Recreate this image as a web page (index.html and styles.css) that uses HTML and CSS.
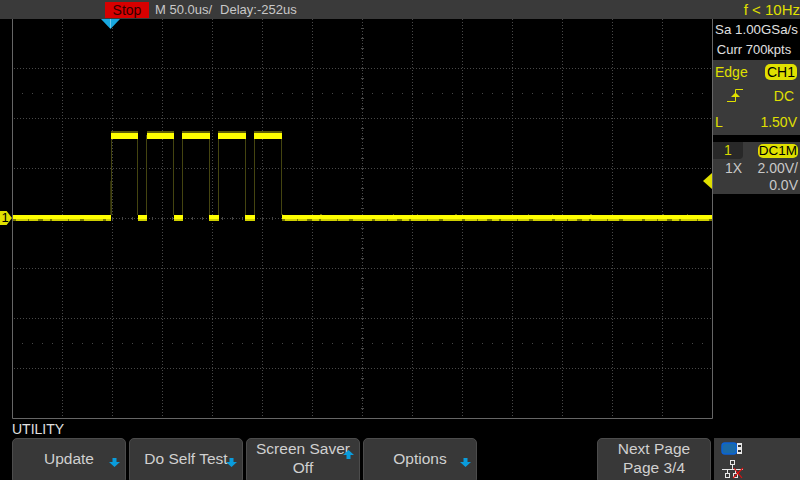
FILE: index.html
```html
<!DOCTYPE html>
<html lang="en">
<head>
  <meta charset="UTF-8">
  <title>Oscilloscope - Utility</title>
  <link rel="stylesheet" href="styles.css">
</head>
<body>
  <div class="screen">
    <!-- top status bar -->
    <div class="topbar">
      <div class="stop">Stop</div>
      <div class="timebase">M 50.0us/</div>
      <div class="delay">Delay:-252us</div>
      <div class="freq">f &lt; 10Hz</div>
    </div>

    <div class="main">
      <div class="scope">
        <svg class="plot" width="701" height="400" viewBox="12 19 701 400">
          <!-- graticule -->
          <g class="grid">
            <line x1="62.5" y1="19" x2="62.5" y2="418"/>
            <line x1="112.5" y1="19" x2="112.5" y2="418"/>
            <line x1="162.5" y1="19" x2="162.5" y2="418"/>
            <line x1="212.5" y1="19" x2="212.5" y2="418"/>
            <line x1="262.5" y1="19" x2="262.5" y2="418"/>
            <line x1="312.5" y1="19" x2="312.5" y2="418"/>
            <line x1="362.5" y1="19" x2="362.5" y2="418"/>
            <line x1="412.5" y1="19" x2="412.5" y2="418"/>
            <line x1="462.5" y1="19" x2="462.5" y2="418"/>
            <line x1="512.5" y1="19" x2="512.5" y2="418"/>
            <line x1="562.5" y1="19" x2="562.5" y2="418"/>
            <line x1="612.5" y1="19" x2="612.5" y2="418"/>
            <line x1="662.5" y1="19" x2="662.5" y2="418"/>
            <line x1="14" y1="68.5" x2="712" y2="68.5"/>
            <line x1="14" y1="118.5" x2="712" y2="118.5"/>
            <line x1="14" y1="168.5" x2="712" y2="168.5"/>
            <line x1="14" y1="218.5" x2="712" y2="218.5"/>
            <line x1="14" y1="268.5" x2="712" y2="268.5"/>
            <line x1="14" y1="318.5" x2="712" y2="318.5"/>
            <line x1="14" y1="368.5" x2="712" y2="368.5"/>
          </g>
          <g class="sparse">
            <line x1="22" y1="93.5" x2="712" y2="93.5"/>
            <line x1="22" y1="343.5" x2="712" y2="343.5"/>
          </g>
          <line x1="362.5" y1="28" x2="362.5" y2="418" class="tick"/>
          <line x1="22" y1="218.5" x2="712" y2="218.5" class="tick"/>
          <path class="frame" d="M12.5 19V418.5H712.5V19"/>

          <!-- edges of the pulses -->
          <g class="edges">
            <line class="edge-faint" x1="110.5" y1="181" x2="110.5" y2="215"/>
            <line x1="111.5" y1="135" x2="111.5" y2="215"/>
            <line x1="137.5" y1="135" x2="137.5" y2="215"/>
            <line x1="146.5" y1="135" x2="146.5" y2="215"/>
            <line x1="173.5" y1="135" x2="173.5" y2="215"/>
            <line x1="182.5" y1="135" x2="182.5" y2="215"/>
            <line x1="209.5" y1="135" x2="209.5" y2="215"/>
            <line x1="218.5" y1="135" x2="218.5" y2="215"/>
            <line x1="245.5" y1="135" x2="245.5" y2="215"/>
            <line x1="254.5" y1="135" x2="254.5" y2="215"/>
            <line x1="281.5" y1="135" x2="281.5" y2="215"/>
          </g>

          <!-- high level -->
          <g class="fuzz-top">
            <rect x="111" y="131" width="27" height="3"/>
            <rect x="147" y="131" width="27" height="3"/>
            <rect x="182" y="131" width="28" height="3"/>
            <rect x="218" y="131" width="28" height="3"/>
            <rect x="254" y="131" width="28" height="3"/>
          </g>
          <g class="trace">
            <rect x="111" y="133" width="27" height="6"/>
            <rect x="147" y="133" width="27" height="6"/>
            <rect x="182" y="133" width="28" height="6"/>
            <rect x="218" y="133" width="28" height="6"/>
            <rect x="254" y="133" width="28" height="6"/>
          </g>

          <!-- low level -->
          <g class="fuzz-low">
            <rect x="13" y="219" width="98" height="2"/>
            <rect x="138" y="219" width="9" height="2"/>
            <rect x="174" y="219" width="9" height="2"/>
            <rect x="209" y="219" width="10" height="2"/>
            <rect x="245" y="219" width="10" height="2"/>
            <rect x="282" y="219" width="430" height="2"/>
          </g>
          <line class="mottle" x1="13" y1="220" x2="111" y2="220"/>
          <line class="mottle" x1="282" y1="220" x2="712" y2="220"/>
          <line class="noise" x1="282" y1="214.5" x2="712" y2="214.5"/>
          <g class="trace">
            <rect x="13" y="215" width="98" height="4"/>
            <rect x="138" y="215" width="9" height="4"/>
            <rect x="174" y="215" width="9" height="4"/>
            <rect x="209" y="215" width="10" height="4"/>
            <rect x="245" y="215" width="10" height="4"/>
            <rect x="282" y="215" width="430" height="4"/>
          </g>
        </svg>

        <!-- markers lying on the plot -->
        <svg class="trig-marker" width="19" height="10" viewBox="0 0 19 10">
          <path fill="#18a8e0" d="M0 0H19L9.5 10Z"/>
          <rect x="9" width="1" height="9" fill="#6cc8ec"/>
        </svg>
        <div class="ch-marker">1</div>
        <div class="level-marker"></div>
      </div>

      <div class="side">
        <div class="acq">
          <div class="acq-rate">Sa 1.00GSa/s</div>
          <div class="acq-depth">Curr 700kpts</div>
        </div>

        <div class="trig">
          <div class="row">
            <span>Edge</span>
            <span class="badge">CH1</span>
          </div>
          <div class="row">
            <svg class="edge-icon" width="18" height="16" viewBox="0 0 18 16">
              <path fill="none" stroke="#e0e000" d="M0 13.5H8.5V1.5H16"/>
              <path fill="#e0e000" d="M4 9L8.5 4.500L13 9Z"/>
            </svg>
            <span class="coupling">DC</span>
          </div>
          <div class="row">
            <span>L</span>
            <span>1.50V</span>
          </div>
        </div>

        <div class="chan">
          <div class="chan-top">
            <div class="chan-tab">1</div>
            <span class="badge badge-wide">DC1M</span>
          </div>
          <div class="chan-row">
            <span class="probe">1X</span>
            <span>2.00V/</span>
          </div>
          <div class="chan-offset">0.0V</div>
        </div>
      </div>
    </div>

    <div class="menu-title">UTILITY</div>

    <div class="softkeys">
      <div class="key">Update
        <svg class="arrow" width="11" height="9" viewBox="0 0 11 9"><path d="M3.5 0H7.5V4H11L5.5 9L0 4H3.5Z"/></svg>
      </div>
      <div class="key">Do Self Test
        <svg class="arrow" width="11" height="9" viewBox="0 0 11 9"><path d="M3.5 0H7.5V4H11L5.5 9L0 4H3.5Z"/></svg>
      </div>
      <div class="key">Screen Saver<br>Off
        <svg class="arrow arrow-up" width="11" height="9" viewBox="0 0 11 9"><path d="M3.5 9H7.5V5H11L5.5 0L0 5H3.5Z"/></svg>
      </div>
      <div class="key">Options
        <svg class="arrow" width="11" height="9" viewBox="0 0 11 9"><path d="M3.5 0H7.5V4H11L5.5 9L0 4H3.5Z"/></svg>
      </div>
      <div class="key-gap"></div>
      <div class="key">Next Page<br>Page 3/4</div>
      <div class="status">
        <svg width="24" height="14" viewBox="0 0 24 14">
          <rect x="1" y="1" width="14.5" height="11" rx="3" fill="#1a6aa8" stroke="#0a62d8" stroke-width="1.5"/>
          <rect x="16" y="1" width="5" height="11" fill="#e8e8e8"/>
          <rect x="17" y="3" width="3" height="2" fill="#333"/>
          <rect x="17" y="8" width="3" height="2" fill="#333"/>
        </svg>
        <svg width="24" height="20" viewBox="0 0 24 20">
          <g fill="none" stroke="#e8e8e8">
            <rect x="9.5" y="0.5" width="4" height="4"/>
            <path d="M11.5 5V9M1 9.5H22M6.5 9.5V13M14.5 9.5V13"/>
            <rect x="4.5" y="13.5" width="4" height="4"/>
            <rect x="12.5" y="13.5" width="4" height="4"/>
          </g>
          <path fill="none" stroke="#e01010" stroke-width="1.2" d="M13 8L21 18M22 8L12 18"/>
        </svg>
      </div>
    </div>
  </div>
</body>
</html>
```

FILE: styles.css
```css
html, body {
  margin: 0;
  padding: 0;
  background: #000;
}

.screen {
  width: 800px;
  height: 480px;
  overflow: hidden;
  display: flex;
  flex-direction: column;
  font-family: "Liberation Sans", Arial, sans-serif;
  font-size: 14px;
  color: #c8c8c8;
}

/* top bar */
.topbar {
  height: 19px;
  flex: none;
  display: flex;
  align-items: center;
  padding-left: 105px;
  background: #3a3a3a;
}

.stop {
  width: 44px;
  height: 16px;
  line-height: 16px;
  text-align: center;
  background: #d80000;
  color: #300;
  font-size: 14px;
}

.timebase {
  margin-left: 6px;
  font-size: 13px;
}

.delay {
  margin-left: 8px;
  font-size: 13px;
}

.freq {
  margin-left: auto;
  color: #e0e000;
  font-size: 15px;
  white-space: nowrap;
}

/* scope + side panel */
.main {
  height: 400px;
  flex: none;
  display: flex;
}

.scope {
  position: relative;
  width: 713px;
  padding-left: 12px;
  box-sizing: border-box;
}

.plot {
  display: block;
}

.grid line {
  stroke: #484848;
  stroke-dasharray: 1 2;
}

.sparse line {
  stroke: #484848;
  stroke-dasharray: 1 9;
}

.tick {
  stroke: #484848;
  stroke-width: 3;
  stroke-dasharray: 1 9;
}

.frame {
  fill: none;
  stroke: #666;
}

.edges line {
  stroke: #444410;
}

.edges .edge-faint {
  stroke: #2c2c08;
}

.trace rect {
  fill: #ffff00;
}

.fuzz-top rect {
  fill: #5c5c08;
}

.fuzz-low rect {
  fill: #d0d000;
}

.mottle {
  stroke: #787800;
  stroke-width: 2;
  stroke-dasharray: 3 12 1 9 5 7 2 16 1 11 4 19;
}

.noise {
  stroke: #5c5c08;
  stroke-dasharray: 1 37 2 71 1 23;
}

.trig-marker {
  position: absolute;
  left: 101px;
  top: 0;
}

.ch-marker {
  position: absolute;
  left: 0;
  top: 192px;
  width: 12px;
  height: 14px;
  line-height: 14px;
  padding-right: 2px;
  box-sizing: border-box;
  text-align: center;
  font-size: 13px;
  color: #000;
  background: #e0e000;
  clip-path: polygon(0 0, 55% 0, 100% 50%, 55% 100%, 0 100%);
}

.level-marker {
  position: absolute;
  left: 703px;
  top: 154px;
  width: 0;
  height: 0;
  border-top: 8.5px solid transparent;
  border-bottom: 8.5px solid transparent;
  border-right: 9px solid #e0e000;
}

.side {
  width: 87px;
  flex: none;
}

.acq {
  height: 41px;
  padding-top: 1px;
  box-sizing: border-box;
  text-align: center;
  color: #e0e0e0;
}

.acq-rate {
  height: 20px;
  line-height: 20px;
  font-size: 13.3px;
}

.acq-depth {
  height: 20px;
  line-height: 20px;
  padding-right: 5px;
  font-size: 13px;
}

.trig {
  height: 75px;
  display: grid;
  grid-template-rows: 23px 25px 27px;
  padding: 0 3px 0 2px;
  box-sizing: border-box;
  background: #3a3a3a;
  color: #e0e000;
  font-size: 14px;
}

.row {
  display: flex;
  align-items: center;
  justify-content: space-between;
}

.edge-icon {
  margin-left: 12px;
}

.coupling {
  margin-right: 3px;
}

.badge {
  width: 32px;
  height: 16px;
  line-height: 16px;
  text-align: center;
  border-radius: 5px;
  background: #e0e000;
  color: #000;
}

.badge-wide {
  width: 40px;
  height: 14px;
  line-height: 14px;
  margin-right: 2px;
  font-size: 13.5px;
}

.chan {
  height: 52px;
  margin-top: 7px;
  background: #3a3a3a;
  font-size: 14px;
}

.chan-top {
  height: 17px;
  display: flex;
  align-items: center;
  justify-content: space-between;
}

.chan-tab {
  width: 30px;
  height: 17px;
  line-height: 17px;
  text-align: center;
  background: #282828;
  color: #d8d800;
  border-radius: 0 0 4px 0;
}

.chan-row {
  height: 18px;
  display: flex;
  align-items: center;
  justify-content: space-between;
  padding: 0 2px 0 12px;
}

.chan-offset {
  height: 17px;
  line-height: 17px;
  padding-right: 2px;
  text-align: right;
}

/* bottom menu */
.menu-title {
  height: 19px;
  line-height: 20px;
  flex: none;
  padding-left: 12px;
  font-size: 14px;
  color: #e0e0e0;
}

.softkeys {
  height: 42px;
  flex: none;
  display: grid;
  grid-template-columns: repeat(6, 114px) 86px;
  gap: 3px;
  padding-left: 12px;
}

.key {
  position: relative;
  display: flex;
  align-items: center;
  justify-content: center;
  text-align: center;
  flex-direction: column;
  box-sizing: border-box;
  height: 46px;
  padding-bottom: 6px;
  line-height: 19px;
  font-size: 15.5px;
  color: #d0d0d0;
  background: #383838;
  border: 1px solid #4c4c4c;
  border-radius: 5px;
}

.arrow {
  position: absolute;
  right: 5px;
  top: 19px;
  fill: #0a9cdc;
}

.arrow-up {
  top: 11px;
}

.status {
  display: flex;
  flex-direction: column;
  padding: 4px 0 0 7px;
  box-sizing: border-box;
  background: #3a3a3a;
  gap: 4px;
}

.status svg {
  display: block;
}
```
